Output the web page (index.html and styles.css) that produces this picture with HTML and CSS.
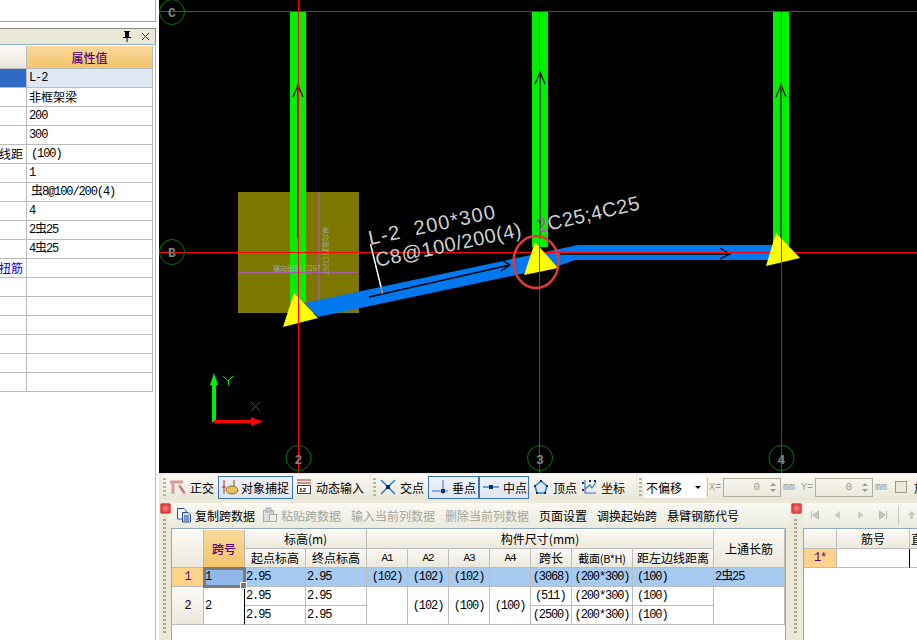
FILE: index.html
```html
<!DOCTYPE html>
<html lang="zh">
<head>
<meta charset="utf-8">
<title>梁配筋</title>
<link rel="stylesheet" href="styles.css">
</head>
<body>
<div class="app">
  <aside class="left">
    <div class="left-top"></div>
    <div class="left-title">
      <svg class="pin" width="10" height="11" viewBox="0 0 10 11"><path d="M3 0h5v1H7v5h2v1H5.500v4h-1V7H1V6h2V1H2V0zM6 1v5h0z" fill="#000"/></svg>
      <svg class="close" width="9" height="9" viewBox="0 0 9 9"><path d="M1 1l7 7M8 1L1 8" stroke="#333" stroke-width="1"/></svg>
    </div>
    <div class="left-frame">
      <table class="prop">
        <colgroup><col class="pc1"><col class="pc2"></colgroup>
        <thead><tr><th class="blank"></th><th class="hot">属性值</th></tr></thead>
        <tbody>
          <tr class="sel"><td class="lbl"></td><td class="m">L-2</td></tr>
          <tr><td class="lbl"></td><td>非框架梁</td></tr>
          <tr><td class="lbl"></td><td class="m">200</td></tr>
          <tr><td class="lbl"></td><td class="m">300</td></tr>
          <tr><td class="lbl">左边线距</td><td class="m ind">(100)</td></tr>
          <tr><td class="lbl"></td><td class="m">1</td></tr>
          <tr><td class="lbl"></td><td class="m ind">虫8@100/200(4)</td></tr>
          <tr><td class="lbl"></td><td class="m">4</td></tr>
          <tr><td class="lbl"></td><td class="m">2虫25</td></tr>
          <tr><td class="lbl"></td><td class="m">4虫25</td></tr>
          <tr><td class="lbl link">抗扭筋</td><td></td></tr>
          <tr><td class="lbl"></td><td></td></tr>
          <tr><td class="lbl"></td><td></td></tr>
          <tr><td class="lbl"></td><td></td></tr>
          <tr><td class="lbl"></td><td></td></tr>
          <tr><td class="lbl"></td><td></td></tr>
          <tr><td class="lbl"></td><td></td></tr>
        </tbody>
      </table>
    </div>
  </aside>

  <main class="main">
    <svg class="canvas" viewBox="159 0 758 473" width="758" height="473">
      <rect x="159" y="0" width="758" height="473" fill="#000"/>
      <rect x="238" y="192" width="121" height="121" fill="#7d7700"/>
      <rect x="290" y="12" width="16" height="290" fill="#00f000"/>
      <rect x="532" y="12" width="16" height="235" fill="#00f000"/>
      <rect x="773" y="12" width="16" height="235" fill="#00f000"/>
      <path d="M238 272.500H358M319 192V311" stroke="#a65ca8" stroke-width="1.500" fill="none"/>
      <text class="tiny" x="273" y="271">横向面筋 CI267</text>
      <text class="tiny" transform="translate(323 227) rotate(90)">纵向面筋 CI267</text>
      <path d="M305 303L578 245H780V260H575L558 266L318 317Z" fill="#0078f0"/>
      <path d="M298 85V238M293 97L298 85L303 97M540 72V238M535 84L540 72L545 84M781 85V238M776 97L781 85L786 97" stroke="#000" stroke-width="1.200" fill="none"/>
      <path d="M369 297L510 265M500 259L510 265L501 271M560 254H730M720 248L730 254L720 259" stroke="#000" stroke-width="1.300" fill="none"/>
      <path d="M159 11.500H917M159 252.500H917M298.500 0V473M539.500 11V473M781.500 11V473" stroke="#f00" stroke-width="1" fill="none"/>
      <path d="M294 293L283 327L318 318ZM535 242L524 275L558 268ZM776 233L766 266L800 258Z" fill="#ffff00"/>
      <path d="M298.500 293V327M539.500 242V275M781.500 233V262" stroke="#f00" stroke-width="1"/>
      <ellipse cx="536" cy="262" rx="22.500" ry="26" fill="none" stroke="#e23a3a" stroke-width="2.500"/>
      <path d="M370.500 244L381 287" stroke="#fff" stroke-width="1.500"/>
      <path d="M381 287L382.500 294" stroke="#f08020" stroke-width="1.500"/>
      <text class="cad cad-wide" transform="translate(370 245) rotate(-12)">L-2&#160;&#160;200*300</text>
      <text class="cad" transform="translate(377 267) rotate(-12)">C8@100/200(4)</text>
      <text class="cad" transform="translate(538 233) rotate(-13)"><tspan class="cad-mark">2</tspan>C25;4C25</text>
      <g fill="none" stroke="#0a7a0a">
        <circle cx="172" cy="12" r="12.500"/>
        <circle cx="172" cy="252" r="12.500"/>
        <circle cx="298.500" cy="458" r="12.500"/>
        <circle cx="540" cy="458" r="12.500"/>
        <circle cx="781.500" cy="458" r="12.500"/>
      </g>
      <text class="axis" x="172" y="17">C</text>
      <text class="axis" x="172" y="257">B</text>
      <text class="axis" x="298.500" y="464">2</text>
      <text class="axis" x="540" y="464">3</text>
      <text class="axis" x="781.500" y="464">4</text>
      <path d="M212 422V385H210L214 373L218 385H216V422Z" fill="#00f000"/>
      <path d="M214 420H251V417L263 421.500L251 426V423H214Z" fill="#f00"/>
      <path class="crisp" d="M223 376L228 381L233 376M228 381V385" stroke="#00f000" fill="none"/>
      <path class="crisp" d="M251 402L260 411M260 402L251 411" stroke="#f00" fill="none"/>
    </svg>

    <div class="bar1">
      <div class="band b1">
        <i class="grip"></i>
        <span class="item it-a"><svg width="16" height="16" viewBox="0 0 16 16"><path d="M0 3H13M3 2V15M9 6L15 15" stroke="#d89a9a" stroke-width="3" fill="none"/><path d="M10 8l4 5" stroke="#5a6a90" fill="none"/></svg>正交</span>
        <span class="item btn btn-snap"><svg width="17" height="16" viewBox="0 0 17 16"><path d="M2 1V15" stroke="#a03020" stroke-width="1"/><path d="M0 8H4M12 1V8M12 8V15" stroke="#a03020" fill="none"/><ellipse cx="10" cy="11" rx="6" ry="4" fill="#e0c060" stroke="#907020"/></svg>对象捕捉</span>
        <span class="item it-c"><svg width="16" height="16" viewBox="0 0 16 16"><path d="M1 1H15M1 4H15" stroke="#a03030"/><rect x="1.500" y="6.500" width="13" height="8" fill="#fff" stroke="#444"/><text class="num" x="3" y="13">12</text></svg>动态输入</span>
      </div>
      <div class="band b2">
        <i class="grip"></i>
        <span class="item it-d"><svg width="16" height="16" viewBox="0 0 16 16"><path d="M1 1L15 15M15 1L1 15" stroke="#2a78d0" stroke-width="1.500"/><rect x="6" y="6" width="4" height="4" fill="#102a70"/></svg>交点</span>
        <span class="item btn btn-pt"><svg width="17" height="16" viewBox="0 0 17 16"><path d="M1 12H17M12 1V15" stroke="#6a9ad8" stroke-width="1.500"/><rect x="10" y="10" width="4" height="4" fill="#102a70"/></svg>垂点</span>
        <span class="item btn btn-pt"><svg width="17" height="16" viewBox="0 0 17 16"><path d="M1 8H17" stroke="#6a9ad8" stroke-width="2"/><rect x="7" y="6" width="4" height="4" fill="#102a70"/></svg>中点</span>
        <span class="item it-e"><svg width="16" height="16" viewBox="0 0 16 16"><path d="M8 2L14 7L12 14H4L2 7Z" fill="#dbe8fa" stroke="#2a78d0" stroke-width="1.500"/><path d="M7 1h2v2H7zM1 6h2v2H1zM13 6h2v2h-2zM3 13h2v2H3zM11 13h2v2h-2z" fill="#102a70"/></svg>顶点</span>
        <span class="item it-f"><svg width="16" height="16" viewBox="0 0 16 16"><path d="M4 1V14H15M4 10L9 6L11 9L15 3" stroke="#2a78d0" stroke-width="1.200" fill="none"/><path d="M1 3h2v2H1zM1 10h2v2H1zM8 1h2v2H8zM13 1h2v2h-2z" fill="#102a70"/></svg>坐标</span>
      </div>
      <div class="band b3">
        <i class="grip"></i>
        <span class="select"><span class="select-text">不偏移</span><i class="caret"></i></span>
        <i class="vsep"></i>
        <span class="coord">X=</span>
        <span class="spin"><span class="spin-val">0</span><span class="spin-arrows"><i class="up"></i><i class="down"></i></span></span>
        <span class="unit">mm</span>
        <span class="coord coord-y">Y=</span>
        <span class="spin"><span class="spin-val">0</span><span class="spin-arrows"><i class="up"></i><i class="down"></i></span></span>
        <span class="unit">mm</span>
        <i class="check"></i>
        <span class="tail">放</span>
      </div>
    </div>

    <div class="bottom">
      <section class="pane pane-main">
        <div class="split"><i class="x-red"></i><i class="dots"></i></div>
        <div class="pane-body">
          <div class="tools">
            <span class="tool t1"><svg width="16" height="16" viewBox="0 0 16 16"><path d="M1.500 1.500H8L10 3.500V12H1.500Z" fill="#fff" stroke="#26498c"/><path d="M6.500 5.500H12L14.500 8V15H6.500Z" fill="#cfe0f8" stroke="#26498c"/><path d="M8 9H13M8 11H13M8 13H13" stroke="#26498c"/></svg>复制跨数据</span>
            <span class="tool t2 off"><svg width="16" height="16" viewBox="0 0 16 16"><rect x="1.500" y="3.500" width="10" height="11" fill="#ddd" stroke="#aaa"/><rect x="4" y="1" width="5" height="4" fill="#ccc" stroke="#aaa"/><rect x="7.500" y="7.500" width="7" height="7" fill="#eee" stroke="#aaa"/></svg>粘贴跨数据</span>
            <span class="tool t3 off">输入当前列数据</span>
            <span class="tool t4 off">删除当前列数据</span>
            <span class="tool t5">页面设置</span>
            <span class="tool t6">调换起始跨</span>
            <span class="tool t7">悬臂钢筋代号</span>
          </div>
          <div class="frame">
            <table class="grid">
              <colgroup>
                <col class="w32"><col class="w41"><col class="w61"><col class="w61">
                <col class="w41"><col class="w41"><col class="w41"><col class="w41">
                <col class="w41"><col class="w61"><col class="w81"><col class="w71">
              </colgroup>
              <thead>
                <tr>
                  <th rowspan="2"></th>
                  <th rowspan="2" class="hot">跨号</th>
                  <th colspan="2">标高(m)</th>
                  <th colspan="7">构件尺寸(mm)</th>
                  <th rowspan="2">上通长筋</th>
                </tr>
                <tr>
                  <th>起点标高</th><th>终点标高</th>
                  <th class="m">A1</th><th class="m">A2</th><th class="m">A3</th><th class="m">A4</th>
                  <th>跨长</th><th class="small">截面(B*H)</th><th>距左边线距离</th>
                </tr>
              </thead>
              <tbody>
                <tr class="cur">
                  <th class="rowno m">1</th>
                  <td class="m active">1</td>
                  <td class="m">2.95</td><td class="m">2.95</td>
                  <td class="m ctr">(102)</td><td class="m ctr">(102)</td><td class="m ctr">(102)</td><td></td>
                  <td class="m ctr">(3068)</td><td class="m ctr">(200*300)</td><td class="m ind">(100)</td>
                  <td class="m">2虫25</td>
                </tr>
                <tr>
                  <th rowspan="2" class="m">2</th>
                  <td rowspan="2" class="m edge">2</td>
                  <td class="m">2.95</td><td class="m">2.95</td>
                  <td rowspan="2"></td>
                  <td rowspan="2" class="m ctr">(102)</td><td rowspan="2" class="m ctr">(100)</td><td rowspan="2" class="m ctr">(100)</td>
                  <td class="m ind">(511)</td><td class="m ctr">(200*300)</td><td class="m ind">(100)</td>
                  <td rowspan="2"></td>
                </tr>
                <tr>
                  <td class="m">2.95</td><td class="m">2.95</td>
                  <td class="m ctr">(2500)</td><td class="m ctr">(200*300)</td><td class="m ind">(100)</td>
                </tr>
              </tbody>
            </table>
          </div>
        </div>
      </section>
      <section class="pane pane-side">
        <div class="split"><i class="x-red"></i><i class="dots"></i></div>
        <div class="pane-body side-body">
          <div class="tools nav">
            <svg width="14" height="14" viewBox="0 0 14 14"><path d="M3 2V12M12 2L5 7L12 12Z" fill="#c8c8c0" stroke="#a8a8a0"/></svg>
            <svg width="14" height="14" viewBox="0 0 14 14"><path d="M10 2L3 7L10 12Z" fill="#c8c8c0"/></svg>
            <svg width="14" height="14" viewBox="0 0 14 14"><path d="M4 2L11 7L4 12Z" fill="#c8c8c0"/></svg>
            <svg width="14" height="14" viewBox="0 0 14 14"><path d="M11 2V12M2 2L9 7L2 12Z" fill="#c8c8c0" stroke="#a8a8a0"/></svg>
            <i class="vsep"></i>
            <svg width="14" height="14" viewBox="0 0 14 14"><path d="M7 2L12 7H9V12H5V7H2Z" fill="#c8c8c0"/></svg>
          </div>
          <div class="frame side-frame">
            <table class="grid side-grid">
              <colgroup><col class="s33"><col class="s73"><col class="s60"></colgroup>
              <thead><tr><th></th><th>筋号</th><th class="lefty">直径</th></tr></thead>
              <tbody><tr><th class="rowno star m">1*</th><td class="edge"></td><td></td></tr></tbody>
            </table>
          </div>
        </div>
      </section>
    </div>
  </main>
</div>
</body>
</html>
```

FILE: styles.css
```css
* { box-sizing: border-box; }
html, body { margin: 0; padding: 0; background: #fff; }
body { width: 917px; height: 640px; overflow: hidden; font: 12px "Noto Sans CJK SC", "Liberation Sans", sans-serif; color: #000; }
i { display: block; font-style: normal; }

.app { display: flex; width: 917px; height: 640px; }

/* left property panel */
.left { width: 159px; flex: none; height: 640px; background: #fff; padding-right: 3px; }
.left-top { height: 22px; border-right: 1px solid #9fb4c8; border-bottom: 1px solid #8aa2b8; }
.left-title { margin-top: 6px; height: 16px; display: flex; align-items: center; justify-content: flex-end; gap: 9px; padding-right: 5px; background: #ebe8d8; border-top: 1px solid #8b8b85; border-right: 1px solid #8b8b85; }
.left-frame { height: 596px; padding-top: 1px; border-top: 1px solid #8fb0cc; border-right: 1px solid #a8c0d4; }
.prop { table-layout: fixed; width: 153px; border-collapse: separate; border-spacing: 0; }
.pc1 { width: 27px; }
.pc2 { width: 126px; }
.prop th { height: 23px; border-right: 1px solid #bcbcbc; border-bottom: 1px solid #bcbcbc; font-weight: 500; font-size: 12px; }
.prop th.blank { background: linear-gradient(#fbfaf6, #e9e6da); }
.hot { background: linear-gradient(#fbd99c, #f3c468); color: #5a0080; }
.prop td { height: 19px; padding: 0 0 0 2px; border-right: 1px solid #bcbcbc; border-bottom: 1px solid #bcbcbc; white-space: nowrap; overflow: hidden; line-height: 16px; }
.prop .lbl { direction: rtl; padding: 0 4px 0 0; }
.prop .sel .lbl { background: #316ac5; }
.prop .sel td:last-child { background: #dfe8f5; }
.link { color: #0000e0; }
.m { font-family: "Liberation Mono", "Noto Sans CJK SC", monospace; font-size: 12px; letter-spacing: -1.1px; }
.prop .ind { padding-left: 4px; }

/* main */
.main { flex: 1; min-width: 0; display: flex; flex-direction: column; background: #ece9d8; }
.canvas { display: block; flex: none; }
.tiny { font: 7px "Noto Sans CJK SC", sans-serif; fill: #a6a6a6; }
.cad { font: 20px "Liberation Sans", sans-serif; fill: #d0d0d0; letter-spacing: 0.5px; }
.cad-wide { letter-spacing: 1.3px; }
.cad-mark { fill: #b050b8; }
.axis { font: 700 13px "Liberation Mono", monospace; fill: #808080; text-anchor: middle; }
.num { font: 700 6px "Liberation Mono", monospace; fill: #000; }
.crisp { shape-rendering: crispEdges; }

/* status toolbar */
.bar1 { height: 28px; flex: none; display: flex; padding-top: 1px; }
.band { height: 26px; display: flex; align-items: center; background: linear-gradient(#faf9f3, #e9e6d8); border-radius: 4px 0 0 4px; }
.b1 { width: 209px; margin-left: 2px; }
.b2 { width: 265px; margin-left: 1px; }
.b3 { flex: 1; min-width: 0; margin-left: 1px; overflow: hidden; }
.grip { width: 3px; height: 18px; margin-left: 2px; background: repeating-linear-gradient(#b8b5a4 0 2px, transparent 2px 4px); flex: none; }
.item { display: inline-flex; align-items: center; gap: 4px; white-space: nowrap; flex: none; }
.btn { height: 23px; border: 1px solid #3a74bc; background: linear-gradient(#f0f3f8, #dfe5ee); }
.it-a { margin-left: 4px; }
.btn-snap { width: 75px; margin-left: 4px; padding-left: 3px; gap: 2px; }
.it-c { margin-left: 3px; }
.b2 .grip { margin-left: 2px; }
.it-d { margin-left: 4px; }
.btn-pt { width: 51px; padding-left: 2px; gap: 4px; }
.it-d + .btn-pt { margin-left: 4px; }
.btn-pt + .btn-pt { margin-left: 0; width: 50px; }
.it-e { margin-left: 4px; }
.it-f { margin-left: 4px; }
.select { width: 62px; height: 22px; margin-left: 2px; padding-left: 2px; display: flex; align-items: center; justify-content: space-between; background: #fff; flex: none; }
.select-text { white-space: nowrap; }
.caret { width: 0; height: 0; margin-right: 5px; border: 3px solid transparent; border-top: 3px solid #000; border-bottom: 0; }
.vsep { width: 1px; height: 18px; margin-left: 1px; background: #c8c5b4; flex: none; }
.coord, .unit { font: 10px "Liberation Mono", monospace; color: #9c9a88; flex: none; white-space: nowrap; }
.coord { margin-left: 1px; width: 13px; }
.coord-y { margin-left: 6px; }
.spin { width: 58px; height: 19px; margin-left: 1px; border: 1px solid #aeac9a; display: flex; align-items: center; justify-content: flex-end; flex: none; font: 11px "Liberation Mono", monospace; color: #9c9a88; }
.spin-arrows { width: 14px; display: flex; flex-direction: column; align-items: center; gap: 3px; margin-left: 6px; }
.up, .down { width: 0; height: 0; border: 3px solid transparent; }
.up { border-bottom: 3px solid #999; border-top: 0; }
.down { border-top: 3px solid #999; border-bottom: 0; }
.unit { margin-left: 2px; }
.check { width: 12px; height: 12px; margin-left: 8px; border: 1px solid #9c9a88; background: #ece9d8; flex: none; }
.tail { margin-left: 7px; flex: none; }

/* bottom panes */
.bottom { flex: 1; min-height: 0; display: flex; }
.pane { display: flex; min-width: 0; height: 139px; }
.pane-main { width: 631px; flex: none; }
.pane-side { flex: 1; }
.split { position: relative; width: 12px; flex: none; }
.x-red { width: 11px; height: 11px; margin: 2px 0 0 1px; border-radius: 2px; background: radial-gradient(#f88, #d02020); border: 1px solid #e06a5a; }
.dots { width: 3px; height: 114px; margin: 5px 0 0 4px; background: repeating-linear-gradient(#aaa795 0 2px, transparent 2px 4px); }
.pane-body { flex: 1; min-width: 0; }
.tools { height: 24px; margin: 2px 0 1px -3px; display: flex; align-items: center; background: linear-gradient(#faf9f3, #ecebdf); border-radius: 4px 0 0 0; white-space: nowrap; }
.tool { display: inline-flex; align-items: center; gap: 3px; flex: none; }
.off { color: #a5a59a; }
.t1 { margin-left: 8px; }
.t2 { margin-left: 7px; }
.t3 { margin-left: 10px; }
.t4 { margin-left: 10px; }
.t5 { margin-left: 10px; }
.t6 { margin-left: 10px; }
.t7 { margin-left: 10px; }

.frame { width: 615px; height: 112px; padding-top: 1px; background: #fff; border: 1px solid #8fa9c0; border-bottom: 0; overflow: hidden; }
.grid { table-layout: fixed; width: 613px; border-collapse: separate; border-spacing: 0; }
.w32 { width: 32px; } .w41 { width: 41px; } .w61 { width: 61px; } .w81 { width: 81px; } .w71 { width: 71px; }
.grid th, .grid td { height: 19px; padding: 0; border-right: 1px solid #bcbcbc; border-bottom: 1px solid #bcbcbc; white-space: nowrap; overflow: hidden; font-weight: 400; line-height: 16px; }
.grid thead th { background: linear-gradient(#fbfaf5, #ebe8dc); text-align: center; }
.grid thead th.hot { background: linear-gradient(#fbd99c, #f3c468); color: #5a0080; font-weight: 500; }
.grid thead th.m { font-size: 11px; }
.grid thead th.small { font-size: 11px; letter-spacing: -0.3px; }
.grid tbody th { background: linear-gradient(#fbfaf5, #ebe8dc); text-align: center; }
.grid td { padding-left: 1px; }
.grid .ctr { text-align: center; padding-left: 0; }
.grid .ind { padding-left: 4px; }
.cur td { background: #a6caf0; }
.grid .cur .rowno, .grid .rowno { background: #fdd28a; color: #5a0080; }
.grid .cur .active { position: relative; overflow: visible; background: #8fb8e8; outline: 3px solid #7a7a7a; outline-offset: -2px; }
.active::after { content: ""; position: absolute; right: -3px; bottom: -3px; width: 5px; height: 5px; background: #7a7a7a; border: 1px solid #fff; }
.grid .edge { border-right: 1px solid #000; }

.side-body { overflow: hidden; }
.nav { margin-left: 1px; gap: 12px; padding-left: 6px; }
.nav .vsep { margin-left: -3px; margin-right: -5px; }
.side-frame { width: 120px; margin-left: 1px; border-right: 0; }
.side-grid { width: 166px; }
.s33 { width: 33px; } .s73 { width: 73px; } .s60 { width: 60px; }
.grid thead th.lefty { text-align: left; padding-left: 1px; }
.grid tbody th.star { background: #fdd28a; }
```
